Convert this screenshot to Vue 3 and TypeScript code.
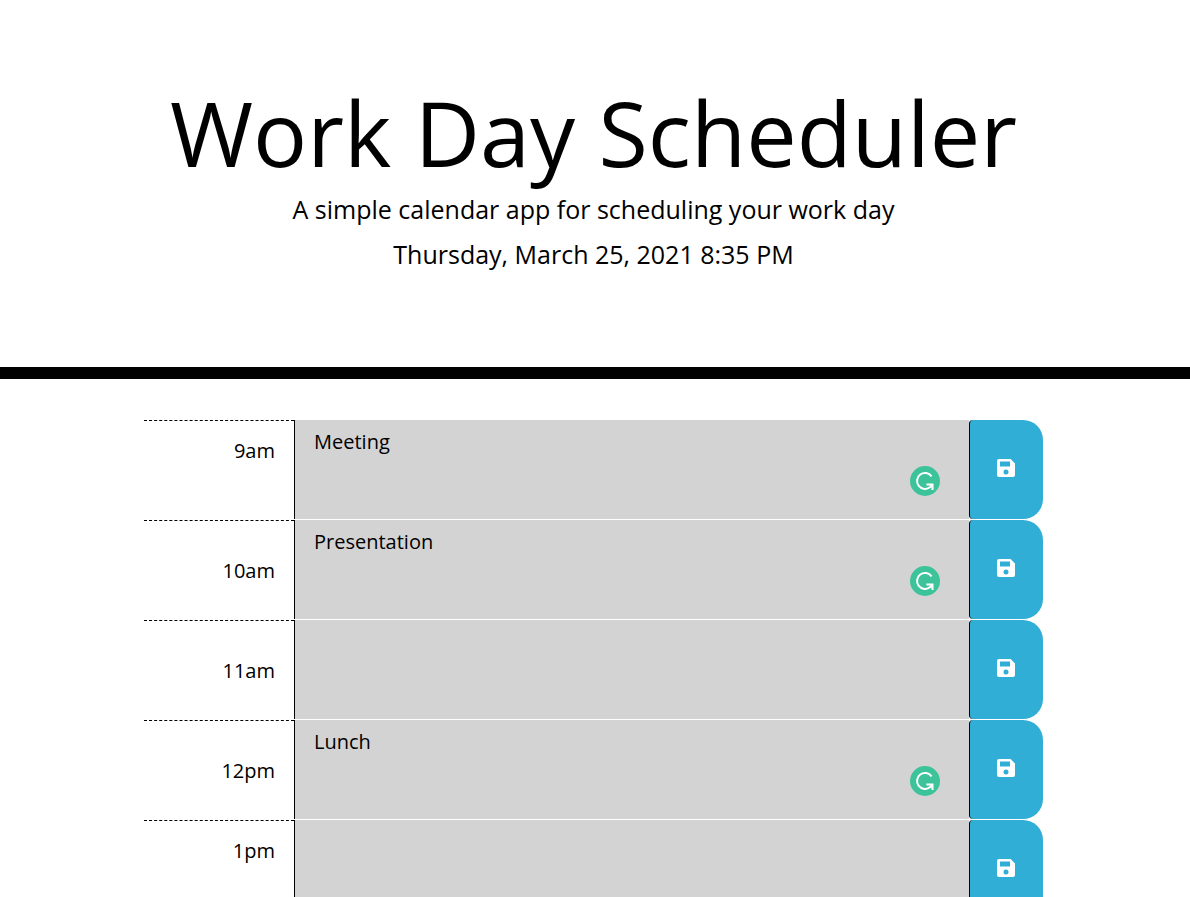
<script setup lang="ts">
import { ref } from 'vue'

interface Slot {
  hour: string
  text: string
  raised: boolean
}

const slots = ref<Slot[]>([
  { hour: '9am', text: 'Meeting', raised: true },
  { hour: '10am', text: 'Presentation', raised: false },
  { hour: '11am', text: '', raised: false },
  { hour: '12pm', text: 'Lunch', raised: false },
  { hour: '1pm', text: '', raised: true },
])
</script>

<template>
  <div class="page">
    <header class="banner">
      <h1 class="title">Work Day Scheduler</h1>
      <p class="lead">A simple calendar app for scheduling your work day</p>
      <p class="lead">Thursday, March 25, 2021 8:35 PM</p>
    </header>
    <main class="schedule">
      <div v-for="(slot, i) in slots" :key="slot.hour" class="row">
        <label class="hour" :class="{ raised: slot.raised }" :for="`slot-${i}`">{{ slot.hour }}</label>
        <div class="entry">
          <textarea :id="`slot-${i}`" v-model="slot.text" class="note" spellcheck="false"></textarea>
          <svg v-if="slot.text" class="checker" viewBox="0 0 30 30" aria-hidden="true">
            <circle cx="15" cy="15" r="15" fill="#3cc39a" />
            <path
              d="M21.6 10.4A8 8 0 1 0 20.2 21.1L22.2 18.8M16.4 18.5H22.5V24"
              fill="none"
              stroke="#fff"
              stroke-width="2"
            />
          </svg>
        </div>
        <button class="save" type="button" :aria-label="`Save ${slot.hour}`">
          <svg class="disk" viewBox="0 0 18 18" aria-hidden="true">
            <path
              fill="#fff"
              fill-rule="evenodd"
              d="M2 0H13.6L18 4.4V16A2 2 0 0 1 16 18H2A2 2 0 0 1 0 16V2A2 2 0 0 1 2 0ZM3 2.5V7.5H13V2.5ZM9 10.5A2.5 2.5 0 1 0 9 15.5A2.5 2.5 0 1 0 9 10.5Z"
            />
          </svg>
        </button>
      </div>
    </main>
  </div>
</template>

<style>
body {
  margin: 0;
  background: #fff;
}
html {
  scrollbar-width: none;
}
</style>

<style scoped>
.page {
  font-family: 'Open Sans', 'Noto Sans', sans-serif;
  font-size: 20px;
  color: #000;
}
.banner {
  padding: 77px 3px 90px 0;
  border-bottom: 12px solid #000;
  text-align: center;
}
.title {
  margin: 0;
  font-size: 90px;
  font-weight: 400;
  line-height: 110px;
}
.lead {
  margin: 0;
  font-size: 25px;
  font-weight: 400;
  line-height: 45px;
}
.schedule {
  max-width: 899px;
  margin: 0 auto;
  padding: 41px 3px 0 0;
}
.row {
  display: grid;
  grid-template-columns: 150px 1fr 74px;
  height: 100px;
}
.hour {
  display: flex;
  align-items: center;
  justify-content: flex-end;
  padding-right: 19px;
  border-top: 1px dashed #000;
}
.hour.raised {
  padding-bottom: 40px;
}
.entry {
  position: relative;
  display: flex;
  border-bottom: 1px solid #fff;
}
.note {
  flex: 1;
  min-width: 0;
  box-sizing: border-box;
  margin: 0;
  padding: 7px 19px;
  border: 0;
  border-left: 1px solid #000;
  border-radius: 0;
  outline: 0;
  resize: none;
  overflow: hidden;
  background: #d3d3d3;
  color: #000;
  font: inherit;
  line-height: 30px;
}
.checker {
  position: absolute;
  right: 29px;
  bottom: 23px;
  width: 30px;
  height: 30px;
}
.save {
  display: flex;
  align-items: center;
  justify-content: center;
  margin: 0 0 1px;
  padding: 0 1px 3px 0;
  border: 0;
  border-left: 1px solid #000;
  border-radius: 4px 20px 20px 4px;
  background: #31aed6;
  cursor: pointer;
}
.disk {
  width: 18px;
  height: 18px;
}
</style>
